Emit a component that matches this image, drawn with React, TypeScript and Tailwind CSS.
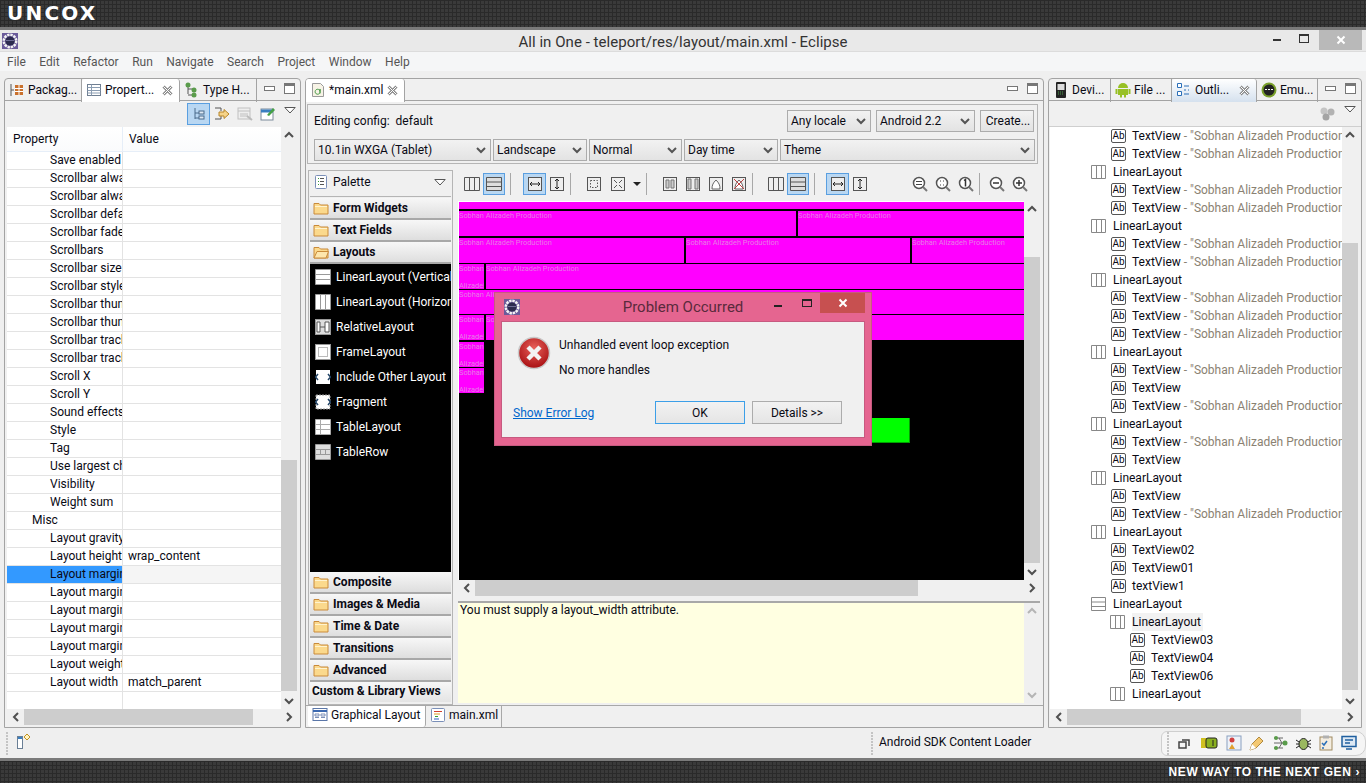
import React from "react";

const band =
  "bg-[#3a3a3a] bg-[linear-gradient(#2a2a2a_1px,transparent_1px),linear-gradient(90deg,#2a2a2a_1px,transparent_1px)] bg-size-[4px_4px]";

const Svg = ({ size = 16, children }: { size?: number; children: React.ReactNode }) => (
  <svg width={size} height={size} viewBox="0 0 16 16" fill="none" className="shrink-0">
    {children}
  </svg>
);

const Chevron = ({ dir, color = "#505050" }: { dir: "up" | "down" | "left" | "right"; color?: string }) => {
  const d = {
    up: "M4 10l4-4 4 4",
    down: "M4 6l4 4 4-4",
    left: "M10 4L6 8l4 4",
    right: "M6 4l4 4-4 4",
  }[dir];
  return (
    <svg width="16" height="16" viewBox="0 0 16 16" fill="none" className="shrink-0">
      <path d={d} stroke={color} strokeWidth="2" />
    </svg>
  );
};

const EclipseIcon = () => (
  <svg width="16" height="16" viewBox="0 0 16 16" className="shrink-0">
    <rect width="16" height="16" fill="#6a5a9a" />
    <circle cx="8" cy="8" r="6.2" fill="none" stroke="#f4f4f4" strokeWidth="2.6" strokeDasharray="2.4 .8" />
    <circle cx="8" cy="8" r="4.6" fill="#2c2b4e" />
    <path d="M4 7.500h8" stroke="#6f6e96" strokeWidth="1" />
  </svg>
);

const MinMax = () => (
  <div className="ml-auto flex items-center gap-[9px] pr-[5px] pb-[3px]">
    <div className="h-[5px] w-[11px] border border-[#777] bg-white" />
    <div className="h-[11px] w-[11px] border border-[#777] border-t-[3px] bg-white" />
  </div>
);

const CloseX = () => (
  <svg width="11" height="11" viewBox="0 0 11 11" fill="none" className="ml-auto shrink-0">
    <path d="M1.500 1.500l8 8M9.500 1.500l-8 8" stroke="#8a8a8a" strokeWidth="3" />
    <path d="M1.500 1.500l8 8M9.500 1.500l-8 8" stroke="#fff" strokeWidth="1" />
  </svg>
);

const Tab = ({
  icon,
  label,
  w,
  active,
  close,
  tone = "bg-white",
}: {
  icon: React.ReactNode;
  label: string;
  w: string;
  active?: boolean;
  close?: boolean;
  tone?: string;
}) => (
  <div
    className={`flex h-[23px] items-center gap-[3px] border-r border-[#a3a3a3] pb-[1px] pl-[4px] pr-[6px] ${w} ${
      active ? `${tone} relative z-10 rounded-t-[3px]` : "mb-[1px] h-[22px]"
    }`}
  >
    {icon}
    <span className="whitespace-nowrap">{label}</span>
    {close && <CloseX />}
  </div>
);

const VScroll = ({ before, thumb, muted }: { before: string; thumb: string; muted?: boolean }) => (
  <div className="flex w-[16px] shrink-0 flex-col bg-[#f0f0f0]">
    <div className="flex h-[16px] shrink-0 items-center justify-center">
      <Chevron dir="up" color={muted ? "#b5b5b5" : "#505050"} />
    </div>
    <div className="flex min-h-0 flex-1 flex-col">
      <div className={before} />
      <div className={`${thumb} bg-[#cdcdcd]`} />
    </div>
    <div className="flex h-[16px] shrink-0 items-center justify-center">
      <Chevron dir="down" color={muted ? "#b5b5b5" : "#505050"} />
    </div>
  </div>
);

const HScroll = ({ thumb }: { thumb: string }) => (
  <div className="flex h-[16px] shrink-0 bg-[#f0f0f0]">
    <div className="flex w-[17px] items-center justify-center">
      <Chevron dir="left" />
    </div>
    <div className="flex flex-1">
      <div className={`${thumb} bg-[#cdcdcd]`} />
    </div>
    <div className="flex w-[17px] items-center justify-center">
      <Chevron dir="right" />
    </div>
  </div>
);

const ViewMenu = () => (
  <svg width="12" height="7" viewBox="0 0 12 7" className="shrink-0">
    <path d="M.8.5h10.4L6 6z" fill="#fff" stroke="#555" />
  </svg>
);

const props: [string, string?, boolean?][] = [
  ["Save enabled"],
  ["Scrollbar always drawn"],
  ["Scrollbar always drawn"],
  ["Scrollbar default"],
  ["Scrollbar fade"],
  ["Scrollbars"],
  ["Scrollbar size"],
  ["Scrollbar style"],
  ["Scrollbar thumb"],
  ["Scrollbar thumb"],
  ["Scrollbar track"],
  ["Scrollbar track"],
  ["Scroll X"],
  ["Scroll Y"],
  ["Sound effects"],
  ["Style"],
  ["Tag"],
  ["Use largest child"],
  ["Visibility"],
  ["Weight sum"],
  ["Misc", undefined, true],
  ["Layout gravity"],
  ["Layout height", "wrap_content"],
  ["Layout margin"],
  ["Layout margin"],
  ["Layout margin"],
  ["Layout margin"],
  ["Layout margin"],
  ["Layout weight"],
  ["Layout width", "match_parent"],
  [""],
];

const PropertiesPanel = () => (
  <div className="flex w-[297px] shrink-0 flex-col rounded-t-[4px] border border-[#a3a3a3] bg-[#f0f0f0]">
    <div className="flex h-[22px] shrink-0 items-start border-b border-[#a3a3a3]">
      <Tab
        w="w-[77px]"
        label="Packag..."
        icon={
          <Svg>
            <path d="M2 2v12M2 8h3" stroke="#555" />
            <rect x="6" y="3" width="8" height="10" fill="#c9702c" />
            <path d="M6 6.500h8M6 9.500h8M10 3v10" stroke="#fff" />
          </Svg>
        }
      />
      <Tab
        active
        close
        w="w-[98px]"
        label="Propert..."
        icon={
          <Svg>
            <rect x="1.500" y="2.500" width="13" height="11" fill="#fff" stroke="#6f7f92" />
            <path d="M1.500 5.500h13M1.500 8.500h13M1.500 11h13M5.500 2.500v11" stroke="#8b9db2" />
          </Svg>
        }
      />
      <Tab
        w="w-[77px]"
        label="Type H..."
        icon={
          <Svg>
            <path d="M4 2v10M4 7h5M4 13h5" stroke="#555" />
            <circle cx="4" cy="3" r="2.500" fill="#5a9c4b" />
            <circle cx="10" cy="8" r="2.500" fill="#5a9c4b" />
            <circle cx="10" cy="13" r="2.500" fill="#5a9c4b" />
          </Svg>
        }
      />
      <div className="flex h-full flex-1 items-center">
        <MinMax />
      </div>
    </div>
    <div className="flex h-[26px] shrink-0 items-center pl-[182px]">
      <div className="flex h-[22px] w-[23px] items-center justify-center border border-[#5a9fe0] bg-[#b9d7f2]">
        <Svg>
          <path d="M4 2v11M4 7h4M4 12h4" stroke="#4a6a8a" />
          <rect x="8" y="5" width="5" height="3" fill="#dfe9f4" stroke="#4a6a8a" />
          <rect x="8" y="10" width="5" height="3" fill="#dfe9f4" stroke="#4a6a8a" />
        </Svg>
      </div>
      <div className="ml-[4px]">
        <Svg>
          <path d="M1 2h6v3M1 13h6v-3" stroke="#555" />
          <path d="M5 6h5V3.500L15 8l-5 4.500V10H5z" fill="#f6d48a" stroke="#b8862a" />
        </Svg>
      </div>
      <div className="ml-[7px]">
        <Svg>
          <rect x="1" y="2" width="12" height="11" fill="#eee" stroke="#c0c0c0" />
          <path d="M1 5h12M3 8h8M3 10h8" stroke="#c0c0c0" />
          <path d="M10 10l5 4" stroke="#bbb" strokeWidth="2" />
        </Svg>
      </div>
      <div className="ml-[7px]">
        <Svg>
          <rect x="1" y="3" width="12" height="11" fill="#fff" stroke="#7a8a9a" />
          <path d="M1 5h12" stroke="#3a7fc0" strokeWidth="3" />
          <path d="M7 9l6-7 2 2-6 6z" fill="#46a046" />
        </Svg>
      </div>
      <div className="mb-[8px] ml-[8px]">
        <ViewMenu />
      </div>
    </div>
    <div className="flex min-h-0 flex-1 pl-[2px] pr-[3px]">
      <div className="flex min-w-0 flex-1 flex-col overflow-hidden bg-white">
        <div className="flex h-[25px] shrink-0 items-start border-b border-[#e6eef8] bg-[linear-gradient(#fff,#fafbfc)]">
          <div className="h-full w-[116px] border-r border-[#e6eef8] pl-[6px] leading-[24px]">Property</div>
          <div className="pl-[6px] leading-[24px]">Value</div>
        </div>
        {props.map(([name, value, group], i) => {
          const selected = i === 23;
          return (
            <div key={i} className="flex h-[18px] shrink-0 border-b border-[#e3e3e3] leading-[17px]">
              <div
                className={`w-[116px] overflow-hidden whitespace-nowrap border-r border-[#e3e3e3] ${
                  group ? "pl-[25px]" : "pl-[43px]"
                } ${selected ? "bg-[#3399ff]" : ""}`}
              >
                {name}
              </div>
              <div className={`flex-1 pl-[5px] ${selected ? "bg-[#f5f5f5]" : ""}`}>{value}</div>
            </div>
          );
        })}
      </div>
      <VScroll before="h-[317px]" thumb="h-[231px]" />
    </div>
    <div className="pl-[2px] pr-[3px] pb-[2px]">
      <HScroll thumb="w-[229px]" />
    </div>
  </div>
);

const selectCls =
  "flex items-center justify-between border border-[#acacac] bg-[linear-gradient(#f2f2f2,#e3e3e3)] pl-[3px] pr-[1px]";

const Select = ({ label, w }: { label: string; w: string }) => (
  <div className={`${selectCls} h-[22px] ${w}`}>
    <span className="whitespace-nowrap">{label}</span>
    <Chevron dir="down" color="#555" />
  </div>
);

const Folder = ({ open }: { open?: boolean }) => (
  <Svg>
    <path d="M1 3.500h5l1.500 1.500H15v9H1z" fill="#fbd98c" stroke="#c98a3a" />
    {open ? (
      <path d="M1 14l3-6.500h11.500L13 14z" fill="#fde6ad" stroke="#c98a3a" />
    ) : (
      <path d="M2 6.500h12" stroke="#fff3cf" />
    )}
  </Svg>
);

const Group = ({ label, open }: { label: string; open?: boolean }) => (
  <div className="flex h-[22px] shrink-0 items-center gap-[4px] border-b-2 border-[#a8a8a8] bg-[linear-gradient(#f7f7f7,#dedede)] pl-[3px] font-bold">
    <Folder open={open} />
    <span className="whitespace-nowrap">{label}</span>
  </div>
);

const paletteIcons: React.ReactNode[] = [
  <path key="a" d="M.5.500h15v15H.5zM.5 5.500h15M.5 10.500h15" fill="#fff" stroke="#999" />,
  <path key="b" d="M.5.500h15v15H.5zM5.500.500v15M10.500.500v15" fill="#fff" stroke="#999" />,
  <g key="c">
    <rect x=".5" y=".5" width="15" height="15" fill="#ddd" stroke="#999" />
    <path d="M2 3h3v10H2zM10 3h4v10h-4zM5 8h5" fill="#fff" stroke="#555" />
  </g>,
  <g key="d">
    <rect x=".5" y=".5" width="15" height="15" fill="#fff" stroke="#999" />
    <rect x="3.500" y="3.500" width="9" height="9" fill="#fff" stroke="#bbb" />
  </g>,
  <g key="e">
    <rect x="1" y="1" width="14" height="14" fill="#fff" />
    <path d="M3 5L.5 8 3 11M13 5l2.500 3L13 11" stroke="#246" strokeWidth="1.500" />
  </g>,
  <g key="f">
    <rect x="1" y="1" width="14" height="14" fill="#fff" stroke="#999" strokeDasharray="2 1" />
    <path d="M3 5L.5 8 3 11M13 5l2.500 3L13 11" stroke="#246" strokeWidth="1.500" />
  </g>,
  <path key="g" d="M.5.500h15v15H.5zM.5 5.500h15M.5 10.500h15M5.500.500v15" fill="#fff" stroke="#aaa" />,
  <path key="h" d="M.5.500h15v15H.5zM.5 5.500h15M.5 10.500h15M5.500 5.500v5M10.500 5.500v5" fill="#ddd" stroke="#999" />,
];

const paletteItems = [
  "LinearLayout (Vertical)",
  "LinearLayout (Horizontal)",
  "RelativeLayout",
  "FrameLayout",
  "Include Other Layout",
  "Fragment",
  "TableLayout",
  "TableRow",
];

const Palette = () => (
  <div className="flex w-[145px] shrink-0 flex-col border border-[#b5b5b5] px-[1px]">
    <div className="flex h-[26px] shrink-0 items-center gap-[4px] border-b border-[#b5b5b5] pb-[3px] pl-[3px] pr-[5px]">
      <Svg>
        <rect x="2.500" y="1.500" width="11" height="13" rx="1" fill="#fff" stroke="#7a8fb8" />
        <path d="M5 4.500h1M5 7.500h1M5 10.500h1" stroke="#3a9a3a" />
        <path d="M7 4.500h4M7 7.500h4M7 10.500h4" stroke="#555" />
      </Svg>
      <span>Palette</span>
      <div className="ml-auto">
        <ViewMenu />
      </div>
    </div>
    <div className="h-[1px] shrink-0" />
    <Group label="Form Widgets" />
    <Group label="Text Fields" />
    <Group label="Layouts" open />
    <div className="flex h-[308px] shrink-0 flex-col overflow-hidden bg-black text-white">
      {paletteItems.map((t, i) => (
        <div key={t} className="flex h-[25px] shrink-0 items-center gap-[5px] pl-[5px]">
          <Svg>{paletteIcons[i]}</Svg>
          <span className="whitespace-nowrap">{t}</span>
        </div>
      ))}
    </div>
    <Group label="Composite" />
    <Group label="Images & Media" />
    <Group label="Time & Date" />
    <Group label="Transitions" />
    <Group label="Advanced" />
    <div className="flex h-[20px] shrink-0 items-center whitespace-nowrap bg-[linear-gradient(#f7f7f7,#e4e4e4)] pb-[3px] pl-[2px] font-bold">
      Custom &amp; Library Views
    </div>
  </div>
);

const Cell = ({ w, children = "Sobhan Alizadeh Production" }: { w: string; children?: React.ReactNode }) => (
  <div className={`${w} overflow-hidden whitespace-nowrap bg-[#ff00ff] text-[7.400px] leading-[9px] text-[#e77de7]`}>
    {children}
  </div>
);

const Narrow = () => (
  <Cell w="w-[25px] h-[25px] shrink-0">
    Sobhan
    <div className="mt-[8px]">Alizadeh</div>
  </Cell>
);

const Canvas = () => (
  <div className="flex h-[379px] flex-1 flex-col overflow-hidden border-t border-l border-t-white border-l-white bg-black">
    <div className="h-[7px] shrink-0 bg-[#ff00ff]" />
    <div className="mt-[2px] flex h-[25px] shrink-0 gap-[2px]">
      <Cell w="w-[337px]" />
      <Cell w="flex-1" />
    </div>
    <div className="mt-[2px] flex h-[25px] shrink-0 gap-[2px]">
      <Cell w="w-[225px]" />
      <Cell w="w-[224px]" />
      <Cell w="flex-1" />
    </div>
    <div className="mt-[1px] flex h-[25px] shrink-0 gap-[2px]">
      <Narrow />
      <Cell w="flex-1" />
    </div>
    <div className="mt-[1px] flex h-[24px] shrink-0">
      <Cell w="flex-1" />
    </div>
    <div className="mt-[1px] flex h-[25px] shrink-0 gap-[2px]">
      <Narrow />
      <Cell w="flex-1" />
    </div>
    <div className="mt-[2px] shrink-0">
      <Narrow />
    </div>
    <div className="mt-[1px] shrink-0">
      <Narrow />
    </div>
    <div className="ml-[413px] mt-[25px] h-[25px] w-[38px] shrink-0 border-b border-r border-[#00a000] bg-[#00ff00]" />
  </div>
);

const Sep = () => <div className="mx-[5px] h-[22px] w-[1px] shrink-0 bg-[#a8a8a8]" />;

const On = ({ children, w = "w-[22px]" }: { children: React.ReactNode; w?: string }) => (
  <div className={`flex h-[22px] ${w} shrink-0 items-center justify-center border border-[#5a9fe0] bg-[#b9d7f2]`}>
    {children}
  </div>
);

const Cols = () => (
  <Svg>
    <path d="M.5 1.500h15v13H.5zM5.500 1.500v13M10.500 1.500v13" fill="#eee" stroke="#555" />
  </Svg>
);
const Rows = () => (
  <Svg>
    <path d="M.5 1.500h15v13H.5zM.5 6h15M.5 10.500h15" fill="#ddd" stroke="#555" />
  </Svg>
);
const FitW = () => (
  <Svg>
    <rect x="1.500" y="1.500" width="13" height="13" fill="#eee" stroke="#555" />
    <path d="M3 8h10M5 6L3 8l2 2M11 6l2 2-2 2" stroke="#222" />
  </Svg>
);
const FitH = () => (
  <Svg>
    <rect x="1.500" y="1.500" width="13" height="13" fill="#eee" stroke="#555" />
    <path d="M8 3v10M6 5l2-2 2 2M6 11l2 2 2-2" stroke="#222" />
  </Svg>
);
const Square = ({ children }: { children: React.ReactNode }) => (
  <Svg>
    <rect x="1.500" y="1.500" width="13" height="13" fill="#eee" stroke="#555" />
    {children}
  </Svg>
);
const Zoom = ({ children }: { children?: React.ReactNode }) => (
  <Svg>
    <circle cx="7" cy="7" r="5.500" fill="#fff" stroke="#555" strokeWidth="1.500" />
    <path d="M11 11l4 4" stroke="#777" strokeWidth="2" />
    {children}
  </Svg>
);

const CanvasToolbar = () => (
  <div className="flex h-[31px] shrink-0 items-center pb-[4px] pl-[6px]">
    <Cols />
    <div className="ml-[3px]">
      <On>
        <Rows />
      </On>
    </div>
    <Sep />
    <div className="ml-[7px]">
      <On w="w-[23px]">
        <FitW />
      </On>
    </div>
    <div className="ml-[3px]">
      <FitH />
    </div>
    <Sep />
    <div className="ml-[10px]">
      <Square>
        <rect x="4.500" y="4.500" width="7" height="7" stroke="#555" strokeDasharray="1.500 1.500" />
      </Square>
    </div>
    <div className="ml-[8px]">
      <Square>
        <path d="M4 4l3 3M12 4L9 7M4 12l3-3M12 12L9 9" stroke="#555" />
      </Square>
    </div>
    <svg width="8" height="4" viewBox="0 0 8 4" className="ml-[7px] shrink-0">
      <path d="M0 0h8L4 4z" fill="#222" />
    </svg>
    <Sep />
    <div className="ml-[10px]">
      <Square>
        <path d="M4 4h3v8H4zM9 4h3v8H9z" fill="#ccc" stroke="#777" />
      </Square>
    </div>
    <div className="ml-[7px]">
      <Square>
        <path d="M3 3h3v10H3zM10 3h3v10h-3z" fill="#ccc" stroke="#777" />
      </Square>
    </div>
    <div className="ml-[7px]">
      <Square>
        <path d="M4 13c0-4 1-6 4-9 3 3 4 5 4 9z" fill="#fff" stroke="#666" />
      </Square>
    </div>
    <div className="ml-[7px]">
      <Square>
        <path d="M4 13c0-4 1-6 4-9 3 3 4 5 4 9z" fill="#fff" stroke="#666" />
        <path d="M3 3l10 10M13 3L3 13" stroke="#c04040" />
      </Square>
    </div>
    <Sep />
    <div className="ml-[10px]">
      <Cols />
    </div>
    <div className="ml-[3px]">
      <On>
        <Rows />
      </On>
    </div>
    <Sep />
    <div className="ml-[6px]">
      <On w="w-[23px]">
        <FitW />
      </On>
    </div>
    <div className="ml-[3px]">
      <FitH />
    </div>
    <div className="ml-[44px]">
      <Zoom>
        <path d="M4 5.500h6M4 8.500h6" stroke="#444" />
      </Zoom>
    </div>
    <div className="ml-[7px]">
      <Zoom>
        <path d="M5 5h1M8 5h1M5 9h1M8 9h1" stroke="#444" />
      </Zoom>
    </div>
    <div className="ml-[7px]">
      <Zoom>
        <path d="M6 4.500L7.500 3.500V10.500" stroke="#333" strokeWidth="1.500" />
      </Zoom>
    </div>
    <Sep />
    <div className="ml-[4px]">
      <Zoom>
        <path d="M4 7h6" stroke="#333" strokeWidth="1.500" />
      </Zoom>
    </div>
    <div className="ml-[7px]">
      <Zoom>
        <path d="M4 7h6M7 4v6" stroke="#333" strokeWidth="1.500" />
      </Zoom>
    </div>
  </div>
);

const EditorPanel = () => (
  <div className="flex w-[739px] shrink-0 flex-col rounded-t-[4px] border border-[#a3a3a3] bg-[#f0f0f0]">
    <div className="flex h-[22px] shrink-0 items-start border-b border-[#a3a3a3]">
      <Tab
        active
        close
        w="w-[99px]"
        label="*main.xml"
        icon={
          <Svg>
            <path d="M2.500 1.500h8l3 3v10h-11z" fill="#f7f3e6" stroke="#9a9a9a" />
            <path d="M10 9a2.500 2.500 0 1 0 0 1.500V7M10 11.500V7" stroke="#4a9a4a" />
          </Svg>
        }
      />
      <div className="flex h-full flex-1 items-center">
        <MinMax />
      </div>
    </div>
    <div className="mx-[1px] mt-[3px] flex h-[60px] w-[731px] shrink-0 flex-col border border-[#b5b5b5]">
      <div className="flex h-[27px] shrink-0 items-center pl-[6px] pt-[5px]">
        <span className="whitespace-nowrap">Editing config: &nbsp;default</span>
        <div className="ml-auto flex gap-[5px] pr-[3px]">
          <Select label="Any locale" w="w-[84px]" />
          <Select label="Android 2.2" w="w-[99px]" />
          <div className={`${selectCls} h-[22px] w-[54px] justify-center`}>Create...</div>
        </div>
      </div>
      <div className="mt-[7px] flex gap-[2px] pl-[6px] pr-[2px]">
        <Select label="10.1in WXGA (Tablet)" w="w-[177px]" />
        <Select label="Landscape" w="w-[94px]" />
        <Select label="Normal" w="w-[93px]" />
        <Select label="Day time" w="w-[94px]" />
        <Select label="Theme" w="flex-1" />
      </div>
    </div>
    <div className="ml-[2px] mt-[6px] flex min-h-0 flex-1">
      <Palette />
      <div className="ml-[5px] mr-[3px] flex min-w-0 flex-1 flex-col">
        <CanvasToolbar />
        <div className="flex h-[379px] shrink-0">
          <Canvas />
          <VScroll before="h-[40px]" thumb="h-[306px]" />
        </div>
        <HScroll thumb="w-[443px]" />
        <div className="h-[7px] shrink-0 border-b-2 border-[#a8a8a8]" />
        <div className="flex h-[100px] shrink-0">
          <div className="flex-1 bg-[#ffffe1] pl-[2px] leading-[14px]">You must supply a layout_width attribute.</div>
          <VScroll before="h-0" thumb="h-0" muted />
        </div>
      </div>
    </div>
    <div className="flex h-[22px] shrink-0 items-start border-t border-[#a8a8a8] pl-[2px]">
      <div className="flex h-[21px] w-[118px] items-center gap-[3px] rounded-b-[3px] border-r border-[#a8a8a8] bg-white pb-[3px] pl-[4px]">
        <Svg>
          <rect x="1" y="1.500" width="14" height="12" fill="#fff" stroke="#5a76a8" />
          <path d="M1 4h14" stroke="#3a68b0" strokeWidth="2" />
          <path d="M3 7h4v2H3zM9 7h4v2H9zM3 10.500h4M9 10.500h4" stroke="#7a8fb8" />
        </Svg>
        <span>Graphical Layout</span>
      </div>
      <div className="flex h-[21px] w-[76px] items-center gap-[3px] border-r border-[#a8a8a8] pb-[3px] pl-[4px]">
        <Svg>
          <rect x="1.500" y="1.500" width="13" height="13" rx="1" fill="#fff" stroke="#7a8fb8" />
          <path d="M4 4.500h8" stroke="#d04030" />
          <path d="M4 7h6" stroke="#e0a020" />
          <path d="M5 9.500h3" stroke="#30a030" />
          <path d="M4 12h5" stroke="#3060c0" />
        </Svg>
        <span>main.xml</span>
      </div>
    </div>
  </div>
);

type Node = { kind: "tv" | "ll" | "lh"; label: string; depth: number; desc?: boolean; boxed?: boolean };

const tv = (label = "TextView", desc = true): Node => ({ kind: "tv", label, depth: 1, desc });
const ll = (): Node => ({ kind: "ll", label: "LinearLayout", depth: 0 });

const tree: Node[] = [
  tv(),
  tv(),
  ll(),
  tv(),
  tv(),
  ll(),
  tv(),
  tv(),
  ll(),
  tv(),
  tv(),
  tv(),
  ll(),
  tv(),
  tv("TextView", false),
  tv(),
  ll(),
  tv(),
  tv("TextView", false),
  ll(),
  tv("TextView", false),
  tv(),
  ll(),
  tv("TextView02", false),
  tv("TextView01", false),
  tv("textView1", false),
  { kind: "lh", label: "LinearLayout", depth: 0 },
  { kind: "ll", label: "LinearLayout", depth: 1, boxed: true },
  { kind: "tv", label: "TextView03", depth: 2 },
  { kind: "tv", label: "TextView04", depth: 2 },
  { kind: "tv", label: "TextView06", depth: 2 },
  { kind: "ll", label: "LinearLayout", depth: 1 },
];

const indent = ["pl-[41px]", "pl-[60px]", "pl-[80px]"];
const indentTv = ["", "pl-[61px]", "pl-[80px]"];

const TreeRow = ({ n }: { n: Node }) => (
  <div className={`flex h-[18px] items-center whitespace-nowrap ${n.kind === "tv" ? indentTv[n.depth] : indent[n.depth]}`}>
    {n.kind === "tv" ? (
      <span className="mr-[6px] flex h-[14px] w-[15px] shrink-0 items-center justify-center rounded-[2px] border border-[#555] text-[10px] leading-none">
        Ab
      </span>
    ) : (
      <div className="mr-[6px] shrink-0">
        <Svg>
          {n.kind === "ll" ? (
            <path d="M.5 1.500h14v13H.5zM5.500 1.500v13M10.500 1.500v13" fill="#fff" stroke="#888" />
          ) : (
            <path d="M.5 1.500h14v13H.5zM.5 6h14M.5 10.500h14" fill="#fff" stroke="#888" />
          )}
        </Svg>
      </div>
    )}
    <span className={n.boxed ? "bg-[#f2f2f2] pr-[2px]" : ""}>{n.label}</span>
    {n.desc && <span className="text-[#8a8172]">&nbsp;- "Sobhan Alizadeh Production"</span>}
  </div>
);

const OutlinePanel = () => (
  <div className="flex w-[314px] shrink-0 flex-col rounded-t-[4px] border border-[#a3a3a3] bg-[#f0f0f0]">
    <div className="flex h-[22px] shrink-0 items-start border-b border-[#a3a3a3]">
      <Tab
        w="w-[62px]"
        label="Devi..."
        icon={
          <Svg>
            <rect x="3" y="0" width="10" height="16" rx="1" fill="#222" />
            <rect x="4.500" y="2" width="7" height="6" fill="#ddd" />
            <path d="M5 10h6M5 12h6" stroke="#4a9a4a" strokeDasharray="1 1" />
          </Svg>
        }
      />
      <Tab
        w="w-[61px]"
        label="File ..."
        icon={
          <Svg>
            <path d="M3 6a5 5 0 0 1 10 0z" fill="#97c024" />
            <rect x="3" y="7" width="10" height="6" fill="#97c024" />
            <path d="M1.500 7v5M14.500 7v5M6 13v2.500M10 13v2.500" stroke="#97c024" strokeWidth="2" />
          </Svg>
        }
      />
      <Tab
        active
        close
        w="w-[85px]"
        tone="bg-[linear-gradient(#fff,#d5e1ee)]"
        label="Outli..."
        icon={
          <Svg>
            <path d="M1.500 1.500h4v4h-4zM1.500 9.500h4v4h-4z" fill="#fff" stroke="#2a6fb8" />
            <path d="M8 4h5M8 8h2M12 8h1M8 12h5" stroke="#2a6fb8" />
          </Svg>
        }
      />
      <Tab
        w="w-[61px]"
        label="Emu..."
        icon={
          <Svg>
            <circle cx="8" cy="8" r="7.500" fill="#7aa02a" />
            <circle cx="8" cy="8" r="5.500" fill="#222" />
            <path d="M4 7.500h8" stroke="#fff" strokeDasharray="2 1" />
          </Svg>
        }
      />
      <div className="flex h-full flex-1 items-center">
        <MinMax />
      </div>
    </div>
    <div className="flex h-[26px] shrink-0 items-center justify-end border-b border-[#cfcfcf] pr-[5px]">
      <svg width="15" height="14" viewBox="0 0 15 14" className="mr-[9px] shrink-0">
        <circle cx="4" cy="4" r="3.500" fill="#c4c4c4" />
        <circle cx="11" cy="5" r="3.500" fill="#b2b2b2" />
        <circle cx="6" cy="10" r="3.500" fill="#a4a4a4" />
      </svg>
      <div className="mb-[8px]">
        <ViewMenu />
      </div>
    </div>
    <div className="flex min-h-0 flex-1 pl-[1px] pr-[3px]">
      <div className="min-w-0 flex-1 overflow-hidden bg-white">
        {tree.map((n, i) => (
          <TreeRow key={i} n={n} />
        ))}
      </div>
      <VScroll before="h-[100px]" thumb="h-[447px]" />
    </div>
    <div className="pl-[1px] pr-[3px] pb-[2px]">
      <HScroll thumb="w-[234px]" />
    </div>
  </div>
);

const Dialog = () => (
  <div className="absolute left-[494px] top-[292px] flex h-[154px] w-[378px] flex-col border border-[#c75a80] bg-[#e56590] px-[6px] pb-[7px]">
    <div className="relative flex h-[28px] shrink-0 items-center justify-center">
      <div className="absolute left-[3px] top-[6px]">
        <EclipseIcon />
      </div>
      <span className="text-[15px] text-[#5a2a3c]">Problem Occurred</span>
      <div className="absolute right-0 top-0 flex items-start">
        <div className="mr-[20px] mt-[12px] h-[2px] w-[8px] bg-[#222]" />
        <div className="mr-[8px] mt-[6px] h-[8px] w-[10px] border border-t-2 border-[#222]" />
        <div className="flex h-[20px] w-[45px] items-center justify-center bg-[#c75050]">
          <svg width="10" height="10" viewBox="0 0 10 10">
            <path d="M1.500 1.500l7 7M8.500 1.500l-7 7" stroke="#fff" strokeWidth="2" />
          </svg>
        </div>
      </div>
    </div>
    <div className="flex flex-1 flex-col border border-[#c75a80] bg-[#f0f0f0] pl-[11px] pr-[22px]">
      <div className="flex">
        <svg width="34" height="34" viewBox="0 0 34 34" className="ml-[4px] mt-[14px] shrink-0">
          <defs>
            <radialGradient id="err" cx="50%" cy="35%" r="65%">
              <stop offset="0" stopColor="#e8605a" />
              <stop offset="1" stopColor="#a80f12" />
            </radialGradient>
          </defs>
          <circle cx="17" cy="17" r="15.500" fill="url(#err)" stroke="#c9c9c9" strokeWidth="1.500" />
          <path d="M11 11l12 12M23 11L11 23" stroke="#f3f3f3" strokeWidth="4.500" />
        </svg>
        <div className="ml-[8px] flex flex-col">
          <div className="mt-[15px] leading-[16px]">Unhandled event loop exception</div>
          <div className="mt-[9px] leading-[16px]">No more handles</div>
        </div>
      </div>
      <div className="mt-auto mb-[13px] flex items-center">
        <span className="text-[#0066cc] underline">Show Error Log</span>
        <div className="ml-auto flex h-[23px] w-[90px] items-center justify-center border border-[#3c9fe8] bg-[linear-gradient(#f2f2f2,#e5e5e5)]">
          OK
        </div>
        <div className="ml-[7px] flex h-[23px] w-[90px] items-center justify-center border border-[#acacac] bg-[linear-gradient(#f2f2f2,#e5e5e5)]">
          Details &gt;&gt;
        </div>
      </div>
    </div>
  </div>
);

const Grip = () => (
  <div className="flex flex-col gap-[1px]">
    {[0, 1, 2, 3, 4, 5, 6, 7].map((i) => (
      <div key={i} className="h-[2px] w-[2px] bg-[#c4c4c4]" />
    ))}
  </div>
);

const StatusBar = () => (
  <div className="flex h-[30px] shrink-0 items-center">
    <div className="ml-[6px]">
      <Grip />
    </div>
    <svg width="16" height="18" viewBox="0 0 16 18" className="ml-[9px] shrink-0">
      <rect x=".5" y="2.500" width="5" height="12" fill="#fff" stroke="#6a7f95" />
      <rect x="1" y="3" width="4" height="2" fill="#3a7fc0" />
      <path d="M10 0l3 3-3 3-3-3z" fill="#fff3c0" stroke="#c09020" />
    </svg>
    <div className="ml-[838px]">
      <Grip />
    </div>
    <span className="mb-[2px] ml-[6px] whitespace-nowrap">Android SDK Content Loader</span>
    <div className="ml-auto flex h-[25px] w-[205px] items-center gap-[7px] rounded-l-[6px] rounded-r-[10px] border border-[#cfcfcf] bg-[#f5f5f5] pl-[5px]">
      <Grip />
      <div className="ml-[1px]">
        <svg width="14" height="16" viewBox="0 0 14 16">
          <path d="M5 5h7v6M2 7h7v6H2z" fill="none" stroke="#444" strokeWidth="1.500" />
        </svg>
      </div>
      <svg width="18" height="16" viewBox="0 0 18 16" className="ml-[3px]">
        <rect x="0" y="3" width="6" height="10" fill="#d0c020" />
        <rect x="5" y="3" width="11" height="10" rx="2" fill="#8ab020" stroke="#222" />
        <path d="M12 5v6" stroke="#222" />
      </svg>
      <Svg>
        <rect x="1" y="1" width="14" height="14" fill="#eef2f8" stroke="#8aa0c0" />
        <circle cx="6" cy="5" r="2.500" fill="#d04040" />
        <path d="M3 14l3-5 3 5z" fill="#e0a030" />
      </Svg>
      <Svg>
        <path d="M1 15l2-6L10 2l4 4-7 7z" fill="#f4c870" stroke="#b08a40" />
        <path d="M1 15l2-6 4 4z" fill="#fff" />
      </Svg>
      <Svg>
        <path d="M2 3h9M2 8h9M2 13h9M7 3l3 5-3 5" stroke="#666" />
        <circle cx="4" cy="3" r="2" fill="#5a9c4b" />
        <circle cx="13" cy="8" r="2.500" fill="#5a9c4b" />
        <circle cx="4" cy="13" r="2" fill="#5a9c4b" />
      </Svg>
      <Svg>
        <ellipse cx="8.500" cy="9" rx="4.500" ry="5.500" fill="#9ab860" stroke="#222" />
        <path d="M1 5l3 2M16 5l-3 2M1 13l3-2M16 13l-3-2M1 9h3M13 9h3" stroke="#222" />
      </Svg>
      <Svg>
        <rect x="2" y="2" width="12" height="13" fill="#f4ede0" stroke="#a08a60" />
        <rect x="5" y="0.500" width="6" height="3" fill="#b0b0b0" />
        <path d="M4 8l2 2 3-4M4 13h2" stroke="#2a6fb8" strokeWidth="1.500" />
      </Svg>
      <Svg>
        <rect x="1" y="1.500" width="14" height="10" fill="#dce8f4" stroke="#1f5f9f" strokeWidth="1.500" />
        <path d="M4 5h8M4 8h5M5 14h6" stroke="#1f5f9f" strokeWidth="1.500" />
      </Svg>
    </div>
  </div>
);

export default function App() {
  return (
    <div className="relative flex h-[783px] w-[1366px] flex-col overflow-hidden bg-[#efefef] font-['Roboto',sans-serif] text-[12px] text-[#0a0a14]">
      {/* top banner */}
      <div className={`h-[30px] shrink-0 border-b-[3px] border-[#7a7a7a] ${band} pl-[7px] font-['DejaVu_Sans',sans-serif] text-[20px] font-bold leading-[27px] tracking-[2.200px] text-white`}>
        UNCOX
      </div>

      {/* title bar */}
      <div className="relative flex h-[22px] shrink-0 items-center justify-center border-b border-[#dcdcdc] bg-[#e9e9e9] pt-[3px] text-[15px] tracking-[0.05px] text-[#333]">
        <div className="absolute left-[2px] top-[3px]">
          <EclipseIcon />
        </div>
        <span>All in One - teleport/res/layout/main.xml - Eclipse</span>
        <div className="absolute right-[4px] top-0 flex items-start">
          <div className="mr-[18px] mt-[9px] h-[2px] w-[8px] bg-[#333]" />
          <div className="mr-[10px] mt-[4px] h-[9px] w-[10px] border border-t-2 border-[#333]" />
          <div className="flex h-[20px] w-[43px] items-center justify-center bg-[#b9b9b9]">
            <svg width="10" height="10" viewBox="0 0 10 10">
              <path d="M1.500 1.500l7 7M8.500 1.500l-7 7" stroke="#fff" strokeWidth="2" />
            </svg>
          </div>
        </div>
      </div>

      {/* menu */}
      <div className="flex h-[19px] shrink-0 items-center gap-[13.500px] bg-[#f5f6f7] pl-[7px] pt-[1px] text-[#555]">
        {["File", "Edit", "Refactor", "Run", "Navigate", "Search", "Project", "Window", "Help"].map((m) => (
          <span key={m}>{m}</span>
        ))}
      </div>

      {/* workbench */}
      <div className="flex h-[657px] shrink-0 gap-[4px] pl-[4px] pt-[7px]">
        <PropertiesPanel />
        <EditorPanel />
        <OutlinePanel />
      </div>

      <StatusBar />

      {/* bottom banner */}
      <div className={`flex h-[25px] shrink-0 items-center justify-end border-t-[3px] border-[#7a7a7a] ${band} pr-[6px] font-['Liberation_Sans',sans-serif] text-[12px] font-bold tracking-[0.600px] text-white`}>
        NEW WAY TO THE NEXT GEN ›
      </div>

      <Dialog />
    </div>
  );
}
